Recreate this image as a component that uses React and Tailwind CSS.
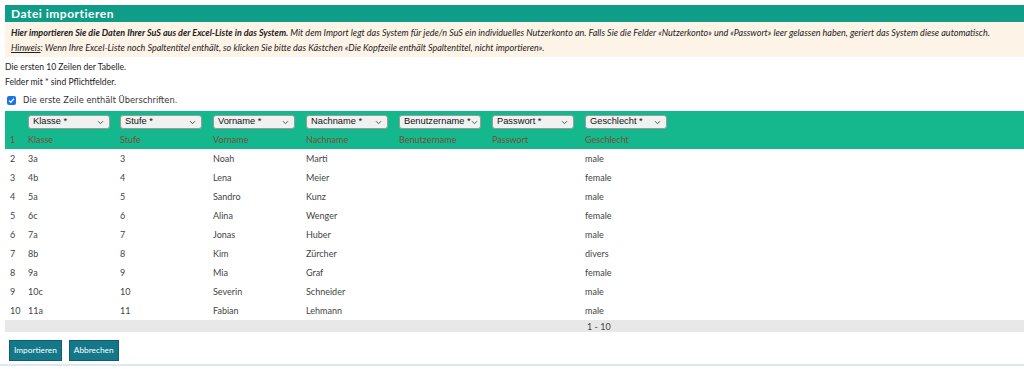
import React from "react";

const fields = ["Klasse", "Stufe", "Vorname", "Nachname", "Benutzername", "Passwort", "Geschlecht"];

const rows = [
  ["3a", "3", "Noah", "Marti", "", "", "male"],
  ["4b", "4", "Lena", "Meier", "", "", "female"],
  ["5a", "5", "Sandro", "Kunz", "", "", "male"],
  ["6c", "6", "Alina", "Wenger", "", "", "female"],
  ["7a", "7", "Jonas", "Huber", "", "", "male"],
  ["8b", "8", "Kim", "Zürcher", "", "", "divers"],
  ["9a", "9", "Mia", "Graf", "", "", "female"],
  ["10c", "10", "Severin", "Schneider", "", "", "male"],
  ["11a", "11", "Fabian", "Lehmann", "", "", "male"],
];

const Select = ({ label }) => (
  <div className="w-[82px] h-[14px] flex items-center justify-between bg-[#f1f1f1] border border-[#9a9a9a] rounded-[3px] pl-[4px] pr-[5px] text-[9.3px] text-[#111] font-['Liberation_Sans',sans-serif] leading-none">
    <span className="whitespace-nowrap">{label} *</span>
    <svg width="7" height="5" viewBox="0 0 7 5" className="shrink-0">
      <path d="M1 1.2 L3.5 3.7 L6 1.2" fill="none" stroke="#444" strokeWidth="0.9" />
    </svg>
  </div>
);

export default function App() {
  return (
    <div className="w-[1024px] h-[369px] bg-white overflow-hidden font-['Lato',sans-serif] text-[#333]">
      <div className="pl-[5px] pt-[5px]">
        <div className="h-[17px] bg-[#0f9c89] flex items-center px-[6px]">
          <h1 className="text-white text-[12px] font-bold tracking-[0.5px] leading-none">
            Datei importieren
          </h1>
        </div>
        <div className="bg-[#fdf3e7] px-[6px] pt-[3px] pb-[2px] text-[9px] italic text-[#222] leading-[15px]">
          <p>
            <span className="font-bold">Hier importieren Sie die Daten Ihrer SuS aus der Excel-Liste in das System.</span>{" "}
            Mit dem Import legt das System für jede/n SuS ein individuelles Nutzerkonto an. Falls Sie die Felder «Nutzerkonto» und «Passwort» leer gelassen haben, geriert das System diese automatisch.
          </p>
          <p>
            <span className="underline">Hinweis</span>: Wenn Ihre Excel-Liste noch Spaltentitel enthält, so klicken Sie bitte das Kästchen «Die Kopfzeile enthält Spaltentitel, nicht importieren».
          </p>
        </div>
        <div className="text-[8.6px] text-[#222] leading-[15px] pt-[3px]">
          <p>Die ersten 10 Zeilen der Tabelle.</p>
          <p>Felder mit * sind Pflichtfelder.</p>
        </div>
        <label className="flex items-center gap-[7px] pl-[2px] h-[18px] mt-[1px] text-[8.3px] text-[#333] font-['DejaVu_Sans',sans-serif]">
          <span className="w-[9px] h-[9px] rounded-[2px] bg-[#1a73e8] flex items-center justify-center">
            <svg width="7" height="7" viewBox="0 0 7 7">
              <path d="M1 3.6 L2.8 5.3 L6 1.6" fill="none" stroke="white" strokeWidth="1.3" />
            </svg>
          </span>
          Die erste Zeile enthält Überschriften.
        </label>

        <table className="w-full border-collapse text-[9px] mt-[2px]">
          <thead>
            <tr className="bg-[#15b88c] h-[20px]">
              <th className="w-[22px]"></th>
              {fields.map((f, j) => (
                <th key={f} className={`${j === 0 ? "w-[92px]" : "w-[93px]"} text-left font-normal pt-[2px] pl-px`}>
                  <Select label={f} />
                </th>
              ))}
              <th></th>
            </tr>
            <tr className="bg-[#15b88c] h-[18px]">
              <th className="text-left font-normal pl-[5px] text-[#7a4d3c]">1</th>
              {fields.map((f) => (
                <th key={f} className="text-left font-normal pl-px text-[#7a4d3c]">
                  {f}
                </th>
              ))}
              <th></th>
            </tr>
          </thead>
          <tbody>
            {rows.map((r, i) => (
              <tr key={i} className="h-[19px] text-[#444]">
                <td className="pl-[5px]">{i + 2}</td>
                {r.map((c, j) => (
                  <td key={j} className="pl-px">
                    {c}
                  </td>
                ))}
                <td></td>
              </tr>
            ))}
            <tr className="bg-[#e8e8e8] h-[12px] text-[#444] leading-none">
              <td colSpan={7}></td>
              <td className="pl-[3px]">1 - 10</td>
              <td></td>
            </tr>
          </tbody>
        </table>

        <div className="flex gap-[7px] pl-[4px] pt-[8px]">
          <button className="h-[21px] px-[4px] bg-[#14788a] text-white text-[8.3px] border border-[#0e5f6c]">
            Importieren
          </button>
          <button className="h-[21px] px-[4px] bg-[#14788a] text-white text-[8.3px] border border-[#0e5f6c]">
            Abbrechen
          </button>
        </div>
      </div>
      <div className="mt-[3px] h-[2px] bg-[#dde9f1]"></div>
    </div>
  );
}
